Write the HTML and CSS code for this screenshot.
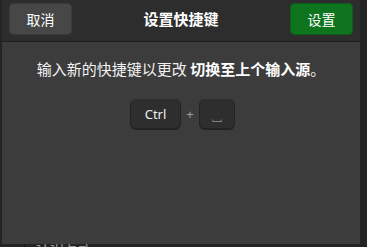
FILE: index.html
```html
<!DOCTYPE html>
<html lang="zh-CN">
<head>
<meta charset="utf-8">
<link rel="stylesheet" href="styles.css">
</head>
<body>
<div class="screen">
  <div class="dialog">
    <header class="header">
      <button class="btn btn-cancel">取消</button>
      <div class="title">设置快捷键</div>
      <button class="btn btn-set">设置</button>
    </header>
    <main class="content">
      <p class="message">输入新的快捷键以更改 <b>切换至上个输入源</b>。</p>
      <div class="keys">
        <span class="key key-ctrl">Ctrl</span>
        <span class="plus">+</span>
        <span class="key key-space">␣</span>
      </div>
    </main>
  </div>
  <div class="below"><span class="below-text">认识方式</span></div>
</div>
</body>
</html>
```
FILE: styles.css
```css
html, body {
  margin: 0;
  padding: 0;
  background: #242424;
  width: 367px;
  height: 247px;
  overflow: hidden;
  font-family: "Noto Sans CJK SC", "Noto Sans", sans-serif;
  color: #ffffff;
}
.screen {
  width: 367px;
  height: 247px;
  position: relative;
  overflow: hidden;
}
.dialog {
  margin-left: 2px;
  width: 358px;
  height: 244px;
  display: flex;
  flex-direction: column;
  background: #3c3c3c;
}
.header {
  height: 42px;
  box-sizing: border-box;
  background: #2d2d2d;
  border-bottom: 1px solid #1e1e1e;
  display: flex;
  align-items: flex-start;
  justify-content: space-between;
  padding: 3px 7px 0 7px;
}
.btn {
  font-family: "Noto Sans CJK SC", sans-serif;
  font-size: 14px;
  color: #ffffff;
  border: none;
  border-radius: 5px;
  height: 32px;
  width: 63px;
  padding: 0;
  line-height: 32px;
}
.btn-cancel {
  background: #474747;
  box-shadow: inset 0 0 0 1px #3a3a3a;
}
.btn-set {
  background: #0e751e;
  box-shadow: inset 0 0 0 1px #0b5e18;
}
.title {
  font-size: 15px;
  font-weight: bold;
  line-height: 32px;
}
.content {
  flex: 1;
  display: flex;
  flex-direction: column;
  align-items: center;
}
.message {
  margin: 16px 0 0 0;
  font-size: 15px;
  line-height: 22px;
  color: #f2f2f2;
}
.message b {
  font-weight: bold;
  color: #ffffff;
}
.keys {
  margin-top: 19px;
  display: flex;
  align-items: center;
  gap: 5px;
  margin-left: 3px;
}
.key {
  height: 29px;
  box-sizing: border-box;
  background: #2e2e2e;
  border-radius: 5px;
  box-shadow: 0 1px 0 1px #232323;
  display: flex;
  align-items: center;
  justify-content: center;
  font-family: "Noto Sans", sans-serif;
  font-size: 13px;
  color: #eeeeee;
}
.key-ctrl {
  width: 49px;
}
.key-space {
  width: 34px;
  font-size: 12px;
  color: #bbbbbb;
  padding-top: 4px;
}
.plus {
  width: 10px;
  text-align: center;
  font-size: 13px;
  color: #9aa0a8;
  font-family: "Noto Sans", sans-serif;
}
.below {
  position: relative;
  height: 3px;
  margin-left: 24px;
  border-left: 1px solid #161616;
  overflow: hidden;
}
.below-text {
  position: absolute;
  left: 11px;
  top: -5px;
  font-size: 14px;
  color: #9a9a9a;
  line-height: 14px;
}
```
